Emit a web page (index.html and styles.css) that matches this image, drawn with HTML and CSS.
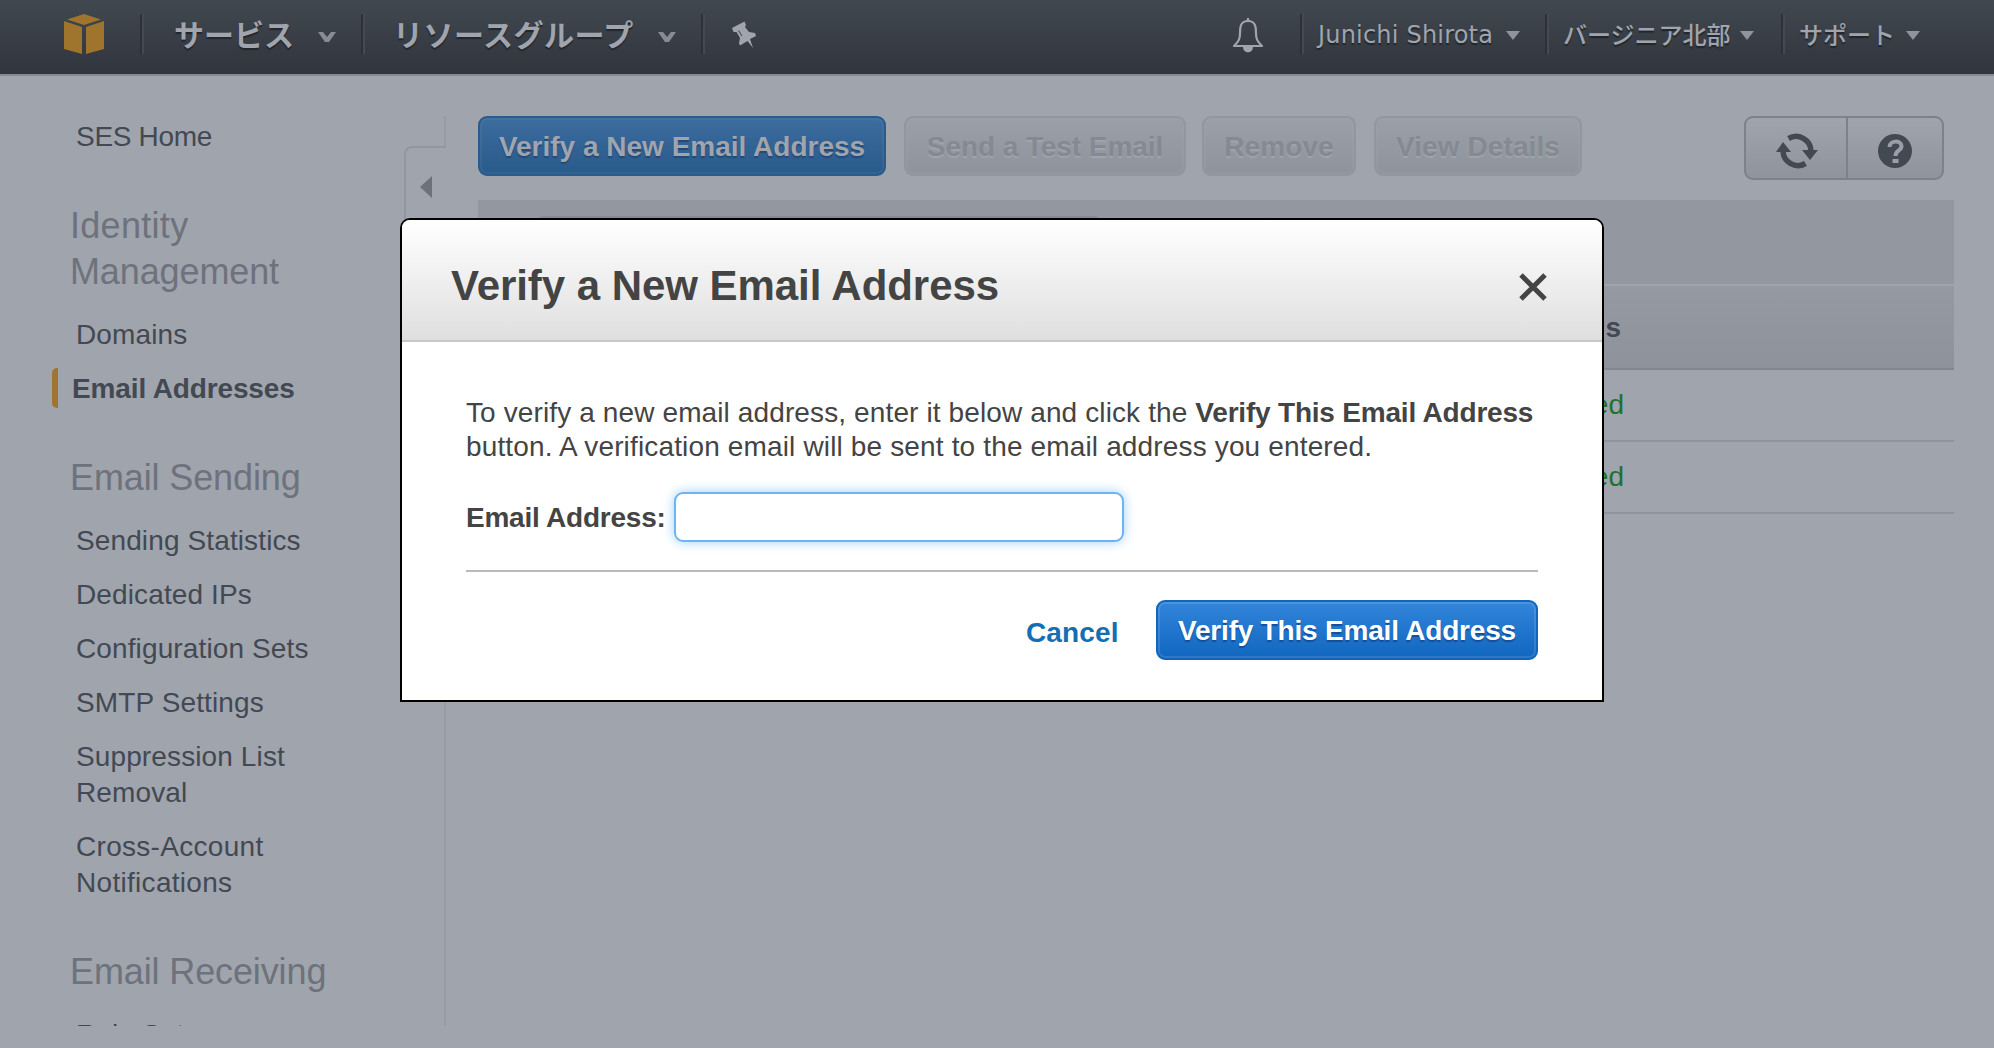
FILE: index.html
```html
<!DOCTYPE html>
<html lang="ja">
<head>
<meta charset="utf-8">
<title>SES Management Console</title>
<link rel="stylesheet" href="styles.css">
</head>
<body>
<header class="nav">
  <div class="nav-cell nav-logo">
    <svg width="40" height="40" viewBox="0 0 40 40" fill="#9f742c"><path d="M20 0 37 5.500 20 11 3 5.500zM0 7l18 6v27L0 35zM40 7l-18 6v27l18-5z"/></svg>
  </div>
  <div class="nav-cell nav-services"><span class="t-services">サービス</span><svg class="chev" width="18" height="10" viewBox="0 0 18 10"><path d="M0 0h5l4 5 4-5h5l-7 10h-4z"/></svg></div>
  <div class="nav-cell nav-groups"><span class="t-groups">リソースグループ</span><svg class="chev" width="18" height="10" viewBox="0 0 18 10"><path d="M0 0h5l4 5 4-5h5l-7 10h-4z"/></svg></div>
  <div class="nav-cell nav-pin">
    <svg width="24" height="27" viewBox="0 0 24 27" fill="#a0a4ad"><path d="M0 7 12.500 0.500 14 4l-1 2 4 5 6 1 1 3-6 3 3 9-5.500-7L8 24.500 7 22l1-5-3.500-6h-3z"/><path d="M6.500 9.500 10 15" stroke="#50555e" stroke-width="1.200"/></svg>
  </div>
  <div class="nav-bell">
    <svg width="32" height="35" viewBox="0 0 32 35" fill="none" stroke="#a0a4ad" stroke-width="2.200"><path d="M16 3C8 3 8 10 8 15c0 6-1 8-6 13h28c-5-5-6-7-6-13 0-5 0-12-8-12z" stroke-linejoin="round"/><path d="M16 0v3"/><path d="M11 29h10c0 7-10 7-10 0z" fill="#a0a4ad" stroke="none"/></svg>
  </div>
  <div class="nav-cell nav-user"><span class="t-user">Junichi Shirota</span><i class="tri"></i></div>
  <div class="nav-cell nav-region"><span class="t-region">バージニア北部</span><i class="tri"></i></div>
  <div class="nav-cell nav-support"><span class="t-support">サポート</span><i class="tri"></i></div>
</header>
<div class="page">
  <nav class="sidebar">
    <a class="item tight">SES Home</a>
    <h2><span class="wide">Identity</span><br>Management</h2>
    <a class="item">Domains</a>
    <a class="item active">Email Addresses</a>
    <h2>Email Sending</h2>
    <a class="item">Sending Statistics</a>
    <a class="item">Dedicated IPs</a>
    <a class="item">Configuration Sets</a>
    <a class="item">SMTP Settings</a>
    <a class="item">Suppression List<br>Removal</a>
    <a class="item wide">Cross-Account<br>Notifications</a>
    <h2>Email Receiving</h2>
    <a class="item">Rule Sets</a>
  </nav>
  <div class="divider">
    <div class="divider-top"></div>
    <div class="divider-tab"><svg width="12" height="22" viewBox="0 0 12 22"><path d="M12 0v22L0 11z" fill="#6c717b"/></svg></div>
    <div class="divider-rest"></div>
  </div>
  <main class="content">
    <div class="toolbar">
      <button class="btn primary dim b-new">Verify a New Email Address</button>
      <button class="btn off b-test">Send a Test Email</button>
      <button class="btn off b-remove">Remove</button>
      <button class="btn off b-view">View Details</button>
      <div class="tools">
        <span class="tool tool-a"><svg width="42" height="36" viewBox="0 0 42 36" fill="none" stroke="#434952" stroke-width="5.500"><path d="M12.500 5.500A15 15 0 0 1 35 18"/><path d="M29.500 30.500A15 15 0 0 1 7 18"/><path d="M26 17h16l-8 10zM0 19h15L7 9z" fill="#434952" stroke="none"/></svg></span>
        <span class="tool tool-b"><svg width="34" height="34" viewBox="0 0 34 34"><circle cx="17" cy="17" r="17" fill="#434952"/><path d="M11.500 13c0-7 12-7 12-1 0 5-6 4-6 10" fill="none" stroke="#9a9ea7" stroke-width="4"/><path d="M14.500 25h6v4h-6z" fill="#9a9ea7"/></svg></span>
      </div>
    </div>
    <div class="table">
      <div class="filters"><div class="filter-box"></div></div>
      <div class="thead"><span>Status</span></div>
      <div class="row"><span>verified</span></div>
      <div class="row"><span>verified</span></div>
    </div>
  </main>
</div>
<section class="modal">
  <div class="modal-head">
    <h1>Verify a New Email Address</h1>
    <svg width="28" height="28" viewBox="0 0 28 28" stroke="#444" stroke-width="5"><path d="M2 2l24 24M26 2L2 26"/></svg>
  </div>
  <div class="modal-body">
    <p><span class="l1">To verify a new email address, enter it below and click the <b>Verify This Email Address</b></span><br><span class="l2">button. A verification email will be sent to the email address you entered.</span></p>
    <div class="field"><label>Email Address:</label><input type="text"></div>
    <div class="actions"><a class="cancel">Cancel</a><button class="btn primary b-this">Verify This Email Address</button></div>
  </div>
</section>
</body>
</html>
```
FILE: styles.css
```css
* { box-sizing: border-box; }
body {
  margin: 0;
  width: 1994px;
  height: 1048px;
  overflow: hidden;
  background: #a0a4ad;
  font-family: "Liberation Sans", Arial, "Noto Sans CJK JP", sans-serif;
  font-size: 28px;
  color: #444;
}
svg { display: block; flex: none; }
.nav {
  display: flex;
  height: 76px;
  padding-top: 14px;
  border-bottom: 2px solid #868a93;
  background: linear-gradient(#41484f, #31353d);
  color: #a0a4ad;
  text-shadow: 0 2px 1px #22262c;
  white-space: nowrap;
}
.nav-cell { display: flex; align-items: center; height: 40px; line-height: 40px; }
.nav-cell + .nav-cell, .nav-user {
  border-left: 2px solid #2d3138;
  box-shadow: inset 2px 0 #454a52;
}
.nav-logo { width: 140px; padding-left: 64px; }
.nav-services { width: 221px; padding-left: 32px; }
.nav-groups { width: 340px; padding-left: 30px; }
.t-services, .t-groups { font: bold 30px/40px "Noto Sans CJK JP", sans-serif; margin-top: -2px; }
.t-services { width: 120px; margin-right: 24px; }
.t-groups { width: 244px; margin-right: 21px; letter-spacing: 0.500px; }
.chev { fill: #868b95; margin-top: 5px; }
.nav-pin { padding-left: 29px; width: 531px; }
.nav-bell { width: 68px; padding-top: 4px; }
.nav-user { width: 245px; padding-left: 16px; }
.nav-region { width: 236px; padding-left: 16px; }
.nav-support { padding-left: 16px; }
.t-region, .t-support { font: 500 24px/40px "Noto Sans CJK JP", sans-serif; margin-top: -1px; }
.t-user { width: 188px; font: 24px/40px "DejaVu Sans", Verdana, sans-serif; letter-spacing: 0.200px; margin-top: 2px; }
.t-region { width: 177px; }
.t-support { width: 107px; }
.tri { border: 7px solid transparent; border-top: 9px solid #8f949d; border-bottom: 0; margin-top: 3px; }

.page { display: flex; height: 950px; overflow: hidden; }
.sidebar { width: 404px; padding: 43px 0 0 52px; }
.item { display: block; margin-bottom: 18px; padding-left: 24px; line-height: 36px; letter-spacing: 0.120px; color: #434952; }
.sidebar h2 { margin: 48px 0 22px; padding-left: 18px; font-weight: normal; font-size: 36px; line-height: 46px; letter-spacing: -0.120px; color: #6d727c; }
.item.tight { letter-spacing: -0.300px; }
.wide { letter-spacing: 0.300px; }
.active { position: relative; padding-left: 20px; font-weight: bold; letter-spacing: -0.130px; }
.active::before { content: ""; position: absolute; left: 0; top: -3px; width: 6px; height: 40px; border-radius: 5px 0 0 5px; background: #a07431; }
.divider { display: flex; flex-direction: column; align-items: flex-end; width: 42px; padding-top: 40px; }
.divider-top, .divider-rest { width: 2px; background: #979ba4; }
.divider-top { height: 30px; }
.divider-rest { flex: 1; }
.divider-tab { width: 42px; height: 84px; border: 2px solid #92969f; border-right: 0; border-radius: 8px 0 0 8px; padding: 28px 0 0 14px; }
.content { width: 1508px; padding: 40px 0 0 32px; }
.toolbar { display: flex; align-items: flex-start; height: 84px; }
.btn {
  height: 60px;
  margin: 0;
  padding: 1px 0 0;
  border: 2px solid;
  border-radius: 9px;
  font: bold 28px/53px "Liberation Sans", Arial, sans-serif;
  white-space: nowrap;
}
.primary {
  color: #fff;
  border-color: #1166bb;
  background: linear-gradient(#3285db, #1166bf);
  box-shadow: inset 0 0 0 2px rgba(255, 255, 255, .12);
  text-shadow: 0 2px 1px #144f9a;
}
.dim { color: #a0a4ad; border-color: #295b8e; background: linear-gradient(#3d6c9e, #295a8c); box-shadow: inset 0 0 0 2px rgba(160, 164, 173, .1); text-shadow: 0 2px 1px #234a74; }
.off { color: #848a92; border-color: #92969f; background: linear-gradient(#9b9fa8, #8f939c); box-shadow: inset 0 0 0 2px rgba(160, 164, 173, .25); text-shadow: 0 2px 1px #a0a4ad; }
.b-new { width: 408px; margin-right: 18px; }
.b-test { width: 282px; margin-right: 16px; letter-spacing: -0.070px; }
.b-remove { width: 154px; margin-right: 18px; letter-spacing: 0.100px; }
.b-view { width: 208px; letter-spacing: 0.100px; }
.tools { display: flex; width: 200px; height: 64px; margin-left: auto; margin-right: 10px; border: 2px solid #7d818b; border-radius: 9px; background: linear-gradient(#a0a4ad, #8f939c); }
.tool { display: flex; align-items: center; }
.tool-a { width: 102px; padding: 5px 0 0 30px; border-right: 2px solid #7d818b; }
.tool-b { padding: 5px 0 0 30px; }
.table { width: 1476px; }
.filters { height: 86px; padding: 16px 0 0 58px; background: #9397a0; border-bottom: 2px solid #a0a4ad; }
.filter-box { width: 566px; height: 50px; border: 2px solid #868a93; border-radius: 8px; }
.thead { height: 84px; padding-left: 1052px; line-height: 83px; font-weight: bold; color: #434952; background: linear-gradient(#959aa2, #8e929b); border-bottom: 2px solid #82868f; }
.row { height: 72px; padding-left: 1055px; line-height: 70px; color: #1f7230; border-bottom: 2px solid #8f939c; }
.thead span, .row span { display: block; width: 91px; text-align: right; direction: rtl; white-space: nowrap; }

.modal { position: absolute; left: 400px; top: 218px; width: 1204px; height: 484px; border: 2px solid #000; border-radius: 10px 10px 0 0; background: #fff; overflow: hidden; }
.modal-head { display: flex; justify-content: space-between; align-items: center; height: 122px; padding: 12px 55px 0 49px; border-bottom: 2px solid #c8c8c8; background: linear-gradient(#fff, #dfdfdf); }
.modal-head h1 { margin: 0; font-size: 42px; line-height: 50px; letter-spacing: -0.050px; }
.modal-head svg { margin-top: 2px; }
.modal-body { padding: 54px 64px 0; }
.modal-body p { margin: 0; line-height: 34px; white-space: nowrap; }
.l1 { letter-spacing: 0.120px; }
.l1 b { letter-spacing: -0.200px; }
.l2 { letter-spacing: 0.150px; }
.field { display: flex; align-items: center; height: 101px; padding-top: 5px; }
.field label { width: 208px; padding-top: 2px; font-weight: bold; letter-spacing: -0.230px; }
.field input { width: 450px; height: 50px; border: 2px solid #6fb4f0; border-radius: 9px; outline: 0; background: #fff; box-shadow: 0 0 12px #9fd0fa; }
.actions { display: flex; justify-content: flex-end; align-items: flex-start; margin-top: 5px; padding-top: 28px; border-top: 2px solid #b9b9b9; }
.cancel { width: 130px; line-height: 65px; font-weight: bold; letter-spacing: 0.150px; color: #146eb4; }
.b-this { width: 382px; letter-spacing: -0.200px; }
```
